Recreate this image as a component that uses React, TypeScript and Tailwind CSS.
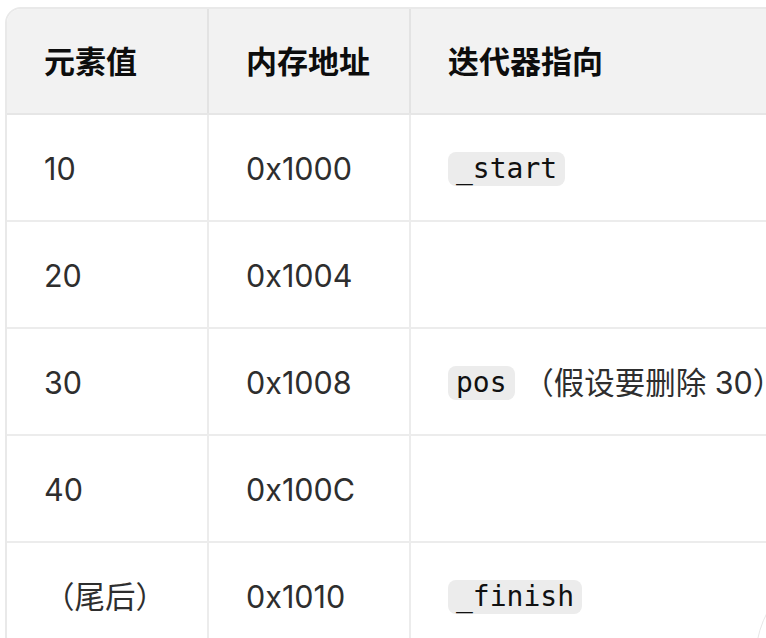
import React from "react";

const sans = "font-['Inter','Noto_Sans_CJK_SC',sans-serif]";

function Code({ children }: { children: React.ReactNode }) {
  return (
    <span className="inline-block rounded-[8px] bg-[#ececec] px-[8px] font-['DejaVu_Sans_Mono',monospace] text-[28px] leading-[34px] text-[#111]">
      {children}
    </span>
  );
}

const rows: { v: string; a: string; p: React.ReactNode }[] = [
  { v: "10", a: "0x1000", p: <Code>_start</Code> },
  { v: "20", a: "0x1004", p: null },
  {
    v: "30",
    a: "0x1008",
    p: (
      <>
        <Code>pos</Code>
        <span className="whitespace-pre"> （假设要删除 30）</span>
      </>
    ),
  },
  { v: "40", a: "0x100C", p: null },
  { v: "（尾后）", a: "0x1010", p: <Code>_finish</Code> },
];

export default function App() {
  return (
    <div className={`relative h-[638px] w-[766px] overflow-hidden bg-white ${sans}`}>
      <div className="ml-[5px] mt-[7px] w-[1000px] overflow-hidden rounded-[16px] border-2 border-[#e9e9e9]">
        <div className="flex h-[106px] border-b-2 border-[#e6e6e6] bg-[#f2f2f2] text-[31px] font-semibold text-[#0d0d0d]">
          <div className="flex w-[202px] items-center border-r-2 border-[#e3e3e3] pl-[37px] pt-[2px]">元素值</div>
          <div className="flex w-[202px] items-center border-r-2 border-[#e3e3e3] pl-[37px] pt-[2px]">内存地址</div>
          <div className="flex flex-1 items-center pl-[37px] pt-[2px]">迭代器指向</div>
        </div>
        {rows.map((r, i) => (
          <div
            key={i}
            className="flex h-[107px] border-b-2 border-[#ececec] text-[30.5px] text-[#2e2e2e]"
          >
            <div className="flex w-[202px] items-center border-r-2 border-[#ececec] pl-[37px] pt-[3px]">{r.v}</div>
            <div className="flex w-[202px] items-center border-r-2 border-[#ececec] pl-[37px] pt-[3px]">{r.a}</div>
            <div className="flex flex-1 items-center pl-[37px] pt-[3px]">{r.p}</div>
          </div>
        ))}
      </div>
      <div className="absolute left-[755px] top-[557px] h-[206px] w-[206px] rounded-full border border-[#e6e6e6]" />
    </div>
  );
}
